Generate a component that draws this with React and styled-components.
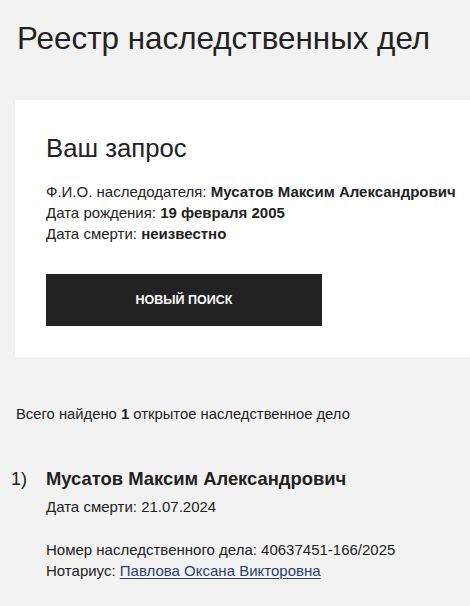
import React from 'react';
import styled, { createGlobalStyle } from 'styled-components';

const GlobalStyle = createGlobalStyle`
    html, body {
        margin: 0;
        padding: 0;
        background: #f2f2f2;
    }
    body {
        font-family: "Liberation Sans", Arial, sans-serif;
        color: #222;
        overflow: hidden;
    }
`;

const Page = styled.div`
    width: 470px;
    min-height: 606px;
    padding-top: 21px;
`;

const Title = styled.h1`
    margin: 0 0 0 17px;
    font-size: 31.4px;
    font-weight: 400;
    line-height: 36px;
    color: #222;
`;

const Card = styled.section`
    margin: 43px 0 0 15px;
    background: #fff;
    padding: 33px 0 31px 31px;
`;

const CardTitle = styled.h2`
    margin: 0 0 18px;
    font-size: 25.7px;
    font-weight: 400;
    line-height: 30px;
`;

const Line = styled.div`
    font-size: 15px;
    line-height: 21px;
    color: #222;

    b {
        font-weight: 700;
    }
`;

const Button = styled.button`
    display: flex;
    align-items: center;
    justify-content: center;
    margin-top: 30px;
    width: 276px;
    height: 52px;
    border: none;
    background: #222;
    color: #fff;
    font-family: "Liberation Sans", Arial, sans-serif;
    font-size: 12.5px;
    font-weight: 700;
    cursor: pointer;
`;

const Summary = styled.p`
    margin: 47px 0 0 16px;
    font-size: 14.8px;
    line-height: 20px;
`;

const Result = styled.div`
    display: flex;
    margin-top: 43px;
`;

const Num = styled.div`
    width: 35px;
    padding-left: 11px;
    font-size: 18px;
    line-height: 24px;
`;

const ResultBody = styled.div`
    display: flex;
    flex-direction: column;
`;

const Name = styled.div`
    font-size: 18.4px;
    line-height: 24px;
    font-weight: 700;
    margin-bottom: 5px;
`;

const Detail = styled.div`
    font-size: 15px;
    line-height: 21px;
    margin-top: ${p => p.$gap || 0}px;
`;

const Link = styled.a`
    color: #2b3f6c;
    text-decoration: underline;
    text-underline-offset: 2px;
`;

export default function App() {
    return (
        <Page>
            <GlobalStyle />
            <Title>Реестр наследственных дел</Title>
            <Card>
                <CardTitle>Ваш запрос</CardTitle>
                <Line>Ф.И.О. наследодателя: <b>Мусатов Максим Александрович</b></Line>
                <Line>Дата рождения: <b>19 февраля 2005</b></Line>
                <Line>Дата смерти: <b>неизвестно</b></Line>
                <Button>НОВЫЙ ПОИСК</Button>
            </Card>
            <Summary>Всего найдено <b>1</b> открытое наследственное дело</Summary>
            <Result>
                <Num>1)</Num>
                <ResultBody>
                    <Name>Мусатов Максим Александрович</Name>
                    <Detail>Дата смерти: 21.07.2024</Detail>
                    <Detail $gap={22}>Номер наследственного дела: 40637451-166/2025</Detail>
                    <Detail>Нотариус: <Link href="#">Павлова Оксана Викторовна</Link></Detail>
                </ResultBody>
            </Result>
        </Page>
    );
}
